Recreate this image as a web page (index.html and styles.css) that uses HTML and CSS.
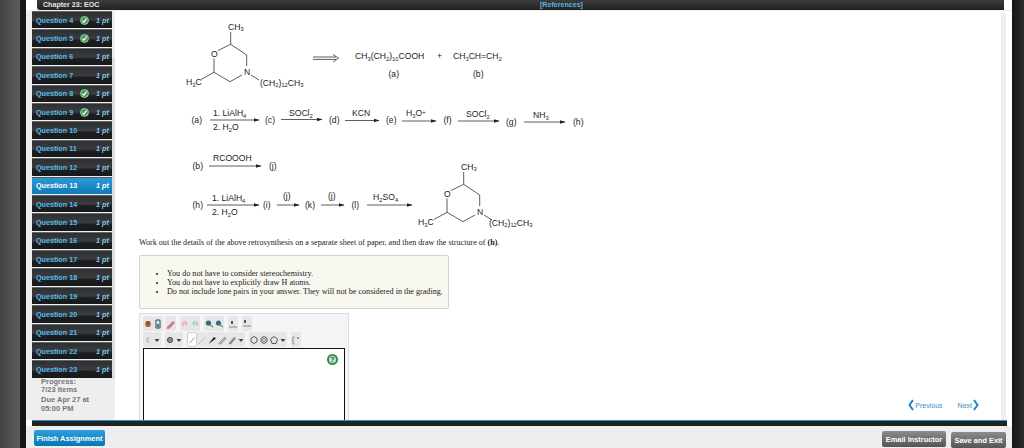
FILE: index.html
```html
<!DOCTYPE html>
<html lang="en">
<head>
<meta charset="utf-8">
<title>Chapter 23: EOC</title>
<link rel="stylesheet" href="styles.css">
</head>
<body>
<div class="frame">
  <div class="gutter-left"></div>
  <div class="center">
    <header class="topbar">
      <span class="chapter">Chapter 23: EOC</span>
      <a class="refs">[References]</a>
    </header>
    <div class="middle">
      <aside class="sidebar">
        <div class="thumb"></div>
        <ul class="questions">
          <li class="q"><span class="q-name">Question 4</span><svg class="q-check" viewBox="0 0 10 10"><circle cx="5" cy="5" r="4.4"/><path d="M2.8 5.2 4.4 7 7.2 3"/></svg><span class="q-pt">1 pt</span></li>
          <li class="q"><span class="q-name">Question 5</span><svg class="q-check" viewBox="0 0 10 10"><circle cx="5" cy="5" r="4.4"/><path d="M2.8 5.2 4.4 7 7.2 3"/></svg><span class="q-pt">1 pt</span></li>
          <li class="q"><span class="q-name">Question 6</span><span class="q-pt">1 pt</span></li>
          <li class="q"><span class="q-name">Question 7</span><span class="q-pt">1 pt</span></li>
          <li class="q"><span class="q-name">Question 8</span><svg class="q-check" viewBox="0 0 10 10"><circle cx="5" cy="5" r="4.4"/><path d="M2.8 5.2 4.4 7 7.2 3"/></svg><span class="q-pt">1 pt</span></li>
          <li class="q"><span class="q-name">Question 9</span><svg class="q-check" viewBox="0 0 10 10"><circle cx="5" cy="5" r="4.4"/><path d="M2.8 5.2 4.4 7 7.2 3"/></svg><span class="q-pt">1 pt</span></li>
          <li class="q"><span class="q-name">Question 10</span><span class="q-pt">1 pt</span></li>
          <li class="q"><span class="q-name">Question 11</span><span class="q-pt">1 pt</span></li>
          <li class="q"><span class="q-name">Question 12</span><span class="q-pt">1 pt</span></li>
          <li class="q active"><span class="q-name">Question 13</span><span class="q-pt">1 pt</span></li>
          <li class="q"><span class="q-name">Question 14</span><span class="q-pt">1 pt</span></li>
          <li class="q"><span class="q-name">Question 15</span><span class="q-pt">1 pt</span></li>
          <li class="q"><span class="q-name">Question 16</span><span class="q-pt">1 pt</span></li>
          <li class="q"><span class="q-name">Question 17</span><span class="q-pt">1 pt</span></li>
          <li class="q"><span class="q-name">Question 18</span><span class="q-pt">1 pt</span></li>
          <li class="q"><span class="q-name">Question 19</span><span class="q-pt">1 pt</span></li>
          <li class="q"><span class="q-name">Question 20</span><span class="q-pt">1 pt</span></li>
          <li class="q"><span class="q-name">Question 21</span><span class="q-pt">1 pt</span></li>
          <li class="q"><span class="q-name">Question 22</span><span class="q-pt">1 pt</span></li>
          <li class="q"><span class="q-name">Question 23</span><span class="q-pt">1 pt</span></li>
        </ul>
        <div class="progress">
          <p>Progress:<br>7/23 Items</p>
          <p>Due Apr 27 at<br>05:00 PM</p>
        </div>
      </aside>
      <main class="main">
        <section class="question">
          <svg class="chem" viewBox="139 10 460 228" width="460" height="228">
            <defs>
              <marker id="head" markerWidth="6" markerHeight="4" refX="5.5" refY="2" orient="auto" markerUnits="userSpaceOnUse"><path d="M0 0 6 2 0 4z" fill="#222"/></marker>
            </defs>
            <g class="bonds">
              <path d="M230.7 32V44.3L246.7 55V66M242 75 230 81.7 214 72.3V58.5M218 50.5 230.7 44.3M214 72.3 201 79.5M251 75 259 80"/>
              <path d="M463.7 172V184.3L479.7 195V206M475 215 463 221.7 447 212.3V198.5M451 190.5 463.7 184.3M447 212.3 434 219.5M484 215 492 220"/>
              <path d="M313 57H336M313 59.4H336M333 54.5 338.5 58.2 333 62"/>
            </g>
            <g class="arrows">
              <path d="M210 120H259" marker-end="url(#head)"/>
              <path d="M281 119.5H322" marker-end="url(#head)"/>
              <path d="M345 120.5H379" marker-end="url(#head)"/>
              <path d="M402 121H436" marker-end="url(#head)"/>
              <path d="M458 121H499" marker-end="url(#head)"/>
              <path d="M524 122H565" marker-end="url(#head)"/>
              <path d="M209 166H261" marker-end="url(#head)"/>
              <path d="M207 205H259" marker-end="url(#head)"/>
              <path d="M277 205H299" marker-end="url(#head)"/>
              <path d="M321 205H344" marker-end="url(#head)"/>
              <path d="M367 205H412" marker-end="url(#head)"/>
            </g>
            <g class="labels">
              <text x="228" y="29.5">CH<tspan class="sub" dy="1.5">3</tspan></text>
              <text x="211" y="56.5">O</text>
              <text x="244" y="74.5">N</text>
              <text x="186" y="85">H<tspan class="sub" dy="1.5">3</tspan><tspan dy="-1.5">C</tspan></text>
              <text x="260" y="85.5">(CH<tspan class="sub" dy="1.5">2</tspan><tspan dy="-1.5">)</tspan><tspan class="sub" dy="1.5">12</tspan><tspan dy="-1.5">CH</tspan><tspan class="sub" dy="1.5">3</tspan></text>
              <text x="355" y="59">CH<tspan class="sub" dy="1.5">3</tspan><tspan dy="-1.5">(CH</tspan><tspan class="sub" dy="1.5">2</tspan><tspan dy="-1.5">)</tspan><tspan class="sub" dy="1.5">10</tspan><tspan dy="-1.5">COOH</tspan></text>
              <text x="437" y="59">+</text>
              <text x="453" y="59">CH<tspan class="sub" dy="1.5">3</tspan><tspan dy="-1.5">CH=CH</tspan><tspan class="sub" dy="1.5">2</tspan></text>
              <text x="388.5" y="76.5">(a)</text>
              <text x="473" y="76.5">(b)</text>

              <text x="191.5" y="123">(a)</text>
              <text x="213" y="116">1.  LiAlH<tspan class="sub" dy="1.5">4</tspan></text>
              <text x="213" y="130">2.  H<tspan class="sub" dy="1.5">2</tspan><tspan dy="-1.5">O</tspan></text>
              <text x="265" y="123">(c)</text>
              <text x="329" y="123">(d)</text>
              <text x="289" y="116">SOCl<tspan class="sub" dy="1.5">2</tspan></text>
              <text x="352" y="115.5">KCN</text>
              <text x="386" y="123">(e)</text>
              <text x="406" y="116">H<tspan class="sub" dy="1.5">3</tspan><tspan dy="-1.5">O</tspan><tspan class="sub" dy="-2.5">+</tspan></text>
              <text x="443.5" y="123">(f)</text>
              <text x="466" y="117">SOCl<tspan class="sub" dy="1.5">2</tspan></text>
              <text x="506" y="125">(g)</text>
              <text x="533" y="118">NH<tspan class="sub" dy="1.5">3</tspan></text>
              <text x="573" y="125">(h)</text>

              <text x="192.5" y="169">(b)</text>
              <text x="213" y="160.5">RCOOOH</text>
              <text x="269" y="169">(j)</text>

              <text x="192.5" y="208">(h)</text>
              <text x="212" y="201">1.  LiAlH<tspan class="sub" dy="1.5">4</tspan></text>
              <text x="212" y="215">2.  H<tspan class="sub" dy="1.5">2</tspan><tspan dy="-1.5">O</tspan></text>
              <text x="263" y="208">(i)</text>
              <text x="283" y="199">(j)</text>
              <text x="305" y="208">(k)</text>
              <text x="328" y="199">(j)</text>
              <text x="351.5" y="208">(l)</text>
              <text x="373" y="200">H<tspan class="sub" dy="1.5">2</tspan><tspan dy="-1.5">SO</tspan><tspan class="sub" dy="1.5">4</tspan></text>

              <text x="461" y="169.5">CH<tspan class="sub" dy="1.5">3</tspan></text>
              <text x="444" y="196.5">O</text>
              <text x="477" y="214.5">N</text>
              <text x="418" y="225">H<tspan class="sub" dy="1.5">3</tspan><tspan dy="-1.5">C</tspan></text>
              <text x="489" y="225.5">(CH<tspan class="sub" dy="1.5">2</tspan><tspan dy="-1.5">)</tspan><tspan class="sub" dy="1.5">12</tspan><tspan dy="-1.5">CH</tspan><tspan class="sub" dy="1.5">3</tspan></text>
            </g>
          </svg>
          <p class="prompt">Work out the details of the above retrosynthesis on a separate sheet of paper, and then draw the structure of <b>(h)</b>.</p>
          <div class="notes">
            <ul>
              <li>You do not have to consider stereochemistry.</li>
              <li>You do not have to explicitly draw H atoms.</li>
              <li>Do not include lone pairs in your answer. They will not be considered in the grading.</li>
            </ul>
          </div>
          <div class="editor">
            <div class="tools">
              <span class="btn"><svg viewBox="0 0 10 12"><path d="M2 6 3 3h4l1 3-1 3H3z" fill="#b5683a"/><circle cx="5" cy="5" r="1.6" fill="#8a4a2a"/></svg></span>
              <span class="btn"><svg viewBox="0 0 10 12"><path d="M3 2h4v8H3z" fill="#dfe9ee" stroke="#345"/><path d="M4 6h2v3H4z" fill="#2a88b8"/></svg></span>
              <span class="btn wide"><svg viewBox="0 0 10 12"><path d="M1 9 7 3l2 2-6 6H1z" fill="#dc6f96"/></svg></span>
              <span class="gap"></span>
              <span class="btn"><svg viewBox="0 0 10 12"><path d="M2 8V5q0-2 3-2 2 0 3 2L6 9 5 6H4v2z" fill="#eeb7b0"/></svg></span>
              <span class="btn"><svg viewBox="0 0 10 12"><path d="M8 8V5Q8 3 5 3 3 3 2 5l2 4 1-3h1v2z" fill="#a8dcb8"/></svg></span>
              <span class="gap"></span>
              <span class="btn"><svg viewBox="0 0 10 12"><circle cx="4.5" cy="5" r="2.6" fill="#2f6f6a"/><path d="M6 7l3 2" stroke="#4a4" stroke-width="1.4"/></svg></span>
              <span class="btn"><svg viewBox="0 0 10 12"><circle cx="4.5" cy="5" r="2.6" fill="#3a6a8a"/><path d="M6 7l3 2" stroke="#4a4" stroke-width="1.4"/></svg></span>
              <span class="gap"></span>
              <span class="btn"><svg viewBox="0 0 10 12"><path d="M3 3h2v3H3z" fill="#555"/><path d="M1 9h8" stroke="#888"/></svg></span>
              <span class="gap"></span>
              <span class="btn"><svg viewBox="0 0 10 12"><path d="M2 2h2v3H2z" fill="#555"/><path d="M1 8h8" stroke="#888"/></svg></span>
            </div>
            <div class="tools">
              <span class="btn"><svg viewBox="0 0 10 12"><path d="M6.5 4H4.5L4 6l.5 2h2" fill="none" stroke="#aaa"/></svg></span>
              <span class="btn caret"><svg viewBox="0 0 8 12"><path d="M1.5 5h5L4 8z" fill="#444"/></svg></span>
              <span class="gap"></span>
              <span class="btn"><svg viewBox="0 0 10 12"><circle cx="5" cy="6" r="2.6" fill="#888" stroke="#555"/></svg></span>
              <span class="btn caret"><svg viewBox="0 0 8 12"><path d="M1.5 5h5L4 8z" fill="#444"/></svg></span>
              <span class="gap"></span>
              <span class="btn selected"><svg viewBox="0 0 10 12"><path d="M2 10 8 3" stroke="#777" fill="none"/></svg></span>
              <span class="btn"><svg viewBox="0 0 10 12"><path d="M2 10 8 3" stroke="#aaa" stroke-dasharray="1.5 1" fill="none"/></svg></span>
              <span class="btn"><svg viewBox="0 0 10 12"><path d="M1.5 10 7 3l2 1.5z" fill="#222"/></svg></span>
              <span class="btn"><svg viewBox="0 0 10 12"><path d="M1.5 10 8 3M3 10.5 9 4" stroke="#777" fill="none"/></svg></span>
              <span class="btn"><svg viewBox="0 0 10 12"><path d="M1.5 9.5 7 3l2 1.500-5.500 6z" fill="#888"/></svg></span>
              <span class="btn caret"><svg viewBox="0 0 8 12"><path d="M1.5 5h5L4 8z" fill="#444"/></svg></span>
              <span class="gap"></span>
              <span class="btn"><svg viewBox="0 0 10 12"><path d="M5 2.5 8 4.3V7.700L5 9.500 2 7.700V4.300z" fill="none" stroke="#555"/></svg></span>
              <span class="btn"><svg viewBox="0 0 10 12"><path d="M5 2.500 8 4.300V7.700L5 9.500 2 7.700V4.300z" fill="none" stroke="#555"/><circle cx="5" cy="6" r="1.500" fill="none" stroke="#888"/></svg></span>
              <span class="btn"><svg viewBox="0 0 10 12"><path d="M5 2.500 8.500 5 7 9.500H3L1.500 5z" fill="none" stroke="#555"/></svg></span>
              <span class="btn caret"><svg viewBox="0 0 8 12"><path d="M1.500 5h5L4 8z" fill="#444"/></svg></span>
              <span class="gap"></span>
              <span class="btn"><svg viewBox="0 0 10 12"><path d="M3.500 3H2v7h1.500" fill="none" stroke="#888"/><path d="M6 3h2v2H6z" fill="#999"/></svg></span>
            </div>
            <div class="canvas">
              <span class="help">?</span>
            </div>
          </div>
        </section>
        <nav class="pager">
          <a class="page-link"><svg class="chev" viewBox="0 0 6 12"><path d="M5 1 1.500 6 5 11"/></svg>Previous</a>
          <a class="page-link next">Next<svg class="chev" viewBox="0 0 6 12"><path d="M1 1 4.500 6 1 11"/></svg></a>
        </nav>
        <div class="scrollbar"></div>
      </main>
    </div>
    <div class="divider"></div>
    <footer class="footer">
      <button class="finish">Finish Assignment</button>
      <div class="actions">
        <button class="grey">Email Instructor</button>
        <button class="grey lower">Save and Exit</button>
      </div>
    </footer>
  </div>
  <div class="gutter-right"></div>
</div>
</body>
</html>
```
FILE: styles.css
```css
* { box-sizing: border-box; }
html, body { margin: 0; padding: 0; }
body { font-family: "Liberation Sans", Arial, sans-serif; background: #222; }
.frame { display: flex; width: 1024px; height: 448px; overflow: hidden; }
.gutter-left {
  width: 26px;
  background: linear-gradient(90deg, #444 0, #5c5c5c 20px, #161616 20px, #161616 100%);
}
.gutter-right { width: 12px; background: linear-gradient(90deg, #161616 0, #2a2a2a 100%); }
.center { flex: 1; display: flex; flex-direction: column; background: #fff; min-width: 0; }

.topbar {
  flex: none;
  height: 10px;
  margin: 0 8px 0 11px;
  padding-left: 6px;
  background: linear-gradient(#3c3c3c, #222);
  border-radius: 0 0 0 3px;
  display: flex;
  align-items: center;
  font-size: 7.1px;
  line-height: 10px;
  font-weight: bold;
}
.chapter { color: #e8e8e8; width: 497px; }
.refs { color: #5bb4de; }

.middle { flex: none; height: 410px; display: flex; border-top: 1px solid #eee; }
.sidebar { width: 89px; background: #eee; padding-left: 6px; position: relative; }
.thumb { position: absolute; left: 86px; top: 47px; width: 3px; height: 321px; background: #ddd; }
.questions { list-style: none; margin: 0; padding: 0; width: 80px; }
.q {
  height: 17.4px;
  margin-bottom: 1px;
  padding: 0 3px 0 4px;
  display: flex;
  align-items: center;
  background: linear-gradient(#2d3033 0, #3a3c3e 50%, #1c1e20 62%, #17191b 100%);
  font-size: 7.2px;
  font-weight: bold;
  color: #5cbbe8;
  border-top: 1px solid #666;
}
.q-name { flex: 1; white-space: nowrap; }
.q-check { width: 9px; height: 9px; margin-right: 7px; }
.q-check circle { fill: #3f9a55; stroke: #cfe8d4; stroke-width: 0.8; }
.q-check path { fill: none; stroke: #fff; stroke-width: 1.4; }
.q-pt { font-style: italic; color: #7ec8ea; width: 13px; white-space: nowrap; }
.q.active { background: linear-gradient(#2a9ad6, #107ab6); color: #fff; border-top-color: #555; }
.q.active .q-pt { color: #fff; }
.progress { margin: -1px 0 0 9px; font-size: 7.5px; font-weight: bold; color: #777; line-height: 8.5px; }
.progress p { margin: 0 0 1.5px; }

.main { flex: 1; display: flex; padding-left: 24px; min-width: 0; }
.question { flex: 1; min-width: 0; }
.chem { display: block; margin-top: -1px; }
.bonds path, .arrows path { fill: none; stroke: #333; stroke-width: 0.8; }
.labels text { font-family: "Liberation Sans", Arial, sans-serif; font-size: 8.6px; fill: #222; }
.labels .sub { font-size: 5.8px; }

.prompt {
  margin: 0;
  height: 16px;
  font-family: "Liberation Serif", "Times New Roman", serif;
  font-size: 8.1px;
  line-height: 10px;
  color: #222;
}
.notes {
  width: 310px;
  height: 54px;
  margin-top: 1px;
  background: #f8f8f0;
  border: 1px solid #d4d4d4;
  border-radius: 2px;
  display: flex;
  align-items: center;
}
.notes ul {
  margin: 0;
  padding: 0 0 0 27px;
  font-family: "Liberation Serif", "Times New Roman", serif;
  font-size: 8.15px;
  line-height: 9px;
  color: #222;
}
.editor {
  width: 210px;
  height: 107px;
  margin-top: 4px;
  background: #f4f4f4;
  border: 1px solid #ddd;
  border-bottom: 0;
  padding: 2px 3px 0;
}
.tools { display: flex; height: 16px; }
.btn {
  width: 10px;
  height: 15px;
  background: #e6e6e6;
  border-radius: 2px;
  display: flex;
  align-items: center;
  justify-content: center;
}
.btn svg { width: 10px; height: 12px; display: block; }
.btn.wide { width: 11px; margin-left: 2px; }
.btn.caret { width: 8px; }
.btn.caret svg { width: 8px; }
.btn.selected { background: #fff; border: 1px solid #ccc; }
.gap { width: 4px; }
.canvas {
  height: 72px;
  background: #fff;
  border: 1px solid #111;
  border-bottom: 0;
  display: flex;
  justify-content: flex-end;
  align-items: flex-start;
  padding: 5px 6px 0 0;
}
.help {
  width: 11px;
  height: 11px;
  border-radius: 50%;
  background: #d4e8d8;
  border: 2px solid #2f8f45;
  font-size: 7px;
  line-height: 7px;
  font-weight: bold;
  color: #145;
  text-align: center;
}
.pager {
  align-self: flex-end;
  display: flex;
  gap: 15px;
  padding: 0 22px 9px 0;
  font-size: 7px;
  color: #3b8fc4;
}
.page-link { display: flex; align-items: center; gap: 1px; }
.chev { width: 6px; height: 12px; }
.chev path { fill: none; stroke: #1a86c4; stroke-width: 2; }
.scrollbar { width: 5px; margin: 2px 6px 0 0; background: #efefef; }

.divider { flex: none; height: 6px; margin: 0 5px 0 6px; background: #222; border-top: 1px solid #2a93c8; }
.footer {
  flex: 1;
  min-height: 0;
  background: #eee;
  display: flex;
  justify-content: space-between;
  align-items: flex-start;
  padding: 4px 6px 0 8px;
}
.footer button {
  font-family: "Liberation Sans", Arial, sans-serif;
  font-weight: bold;
  font-size: 7.4px;
  padding: 0;
  border: 0;
  border-radius: 2px;
  color: #fff;
  height: 16px;
}
.finish { width: 71px; background: linear-gradient(#2ba0dc, #0c75b0); }
.actions { display: flex; gap: 5px; align-items: flex-start; padding-top: 1px; }
.grey { background: linear-gradient(#8c8c8c, #555); width: 64px; }
.grey.lower { width: 55px; margin-top: 1px; }
```
